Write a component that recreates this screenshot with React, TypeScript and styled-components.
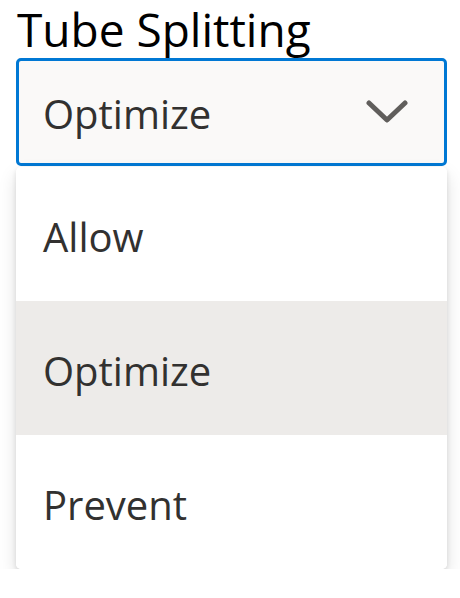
import { FunctionComponent } from "react";
import styled, { createGlobalStyle } from "styled-components";

const GlobalStyle = createGlobalStyle`
  html, body {
    margin: 0;
    padding: 0;
    background: #ffffff;
    font-family: "Open Sans", "Noto Sans", sans-serif;
  }
`;

const Page = styled.div`
  display: flex;
  flex-direction: column;
  padding: 0 13px 0 16px;
`;

const Label = styled.div`
  font-size: 46px;
  line-height: 58px;
  color: #000000;
  padding-left: 1px;
`;

const Field = styled.div`
  box-sizing: border-box;
  height: 108px;
  display: flex;
  align-items: center;
  justify-content: space-between;
  padding: 0 36px 0 24px;
  border: 3px solid #0078d4;
  border-radius: 5px;
  background: #faf9f8;
`;

const FieldText = styled.span`
  font-size: 40px;
  color: #323130;
  padding-top: 2px;
`;

const Menu = styled.div`
  margin-top: 1px;
  display: flex;
  flex-direction: column;
  background: #ffffff;
  border-radius: 5px;
  overflow: hidden;
  box-shadow: 0 8px 18px rgba(0, 0, 0, 0.13), 0 2px 5px rgba(0, 0, 0, 0.11);
`;

const Option = styled.div<{ $selected?: boolean }>`
  box-sizing: border-box;
  height: 134px;
  display: flex;
  align-items: center;
  padding: 5px 27px 0;
  font-size: 40px;
  color: #323130;
  background: ${(p) => (p.$selected ? "#edebe9" : "#ffffff")};
`;

const Chevron = () => (
  <svg width="42" height="24" viewBox="0 0 42 24">
    <path
      d="M3 3 L21 20 L39 3"
      fill="none"
      stroke="#605e5c"
      strokeWidth="5"
      strokeLinecap="round"
      strokeLinejoin="round"
    />
  </svg>
);

const options = ["Allow", "Optimize", "Prevent"];

const App: FunctionComponent = () => {
  const selected = "Optimize";
  return (
    <Page>
      <GlobalStyle />
      <Label>Tube Splitting</Label>
      <Field>
        <FieldText>{selected}</FieldText>
        <Chevron />
      </Field>
      <Menu>
        {options.map((o) => (
          <Option key={o} $selected={o === selected}>
            {o}
          </Option>
        ))}
      </Menu>
    </Page>
  );
};

export default App;
